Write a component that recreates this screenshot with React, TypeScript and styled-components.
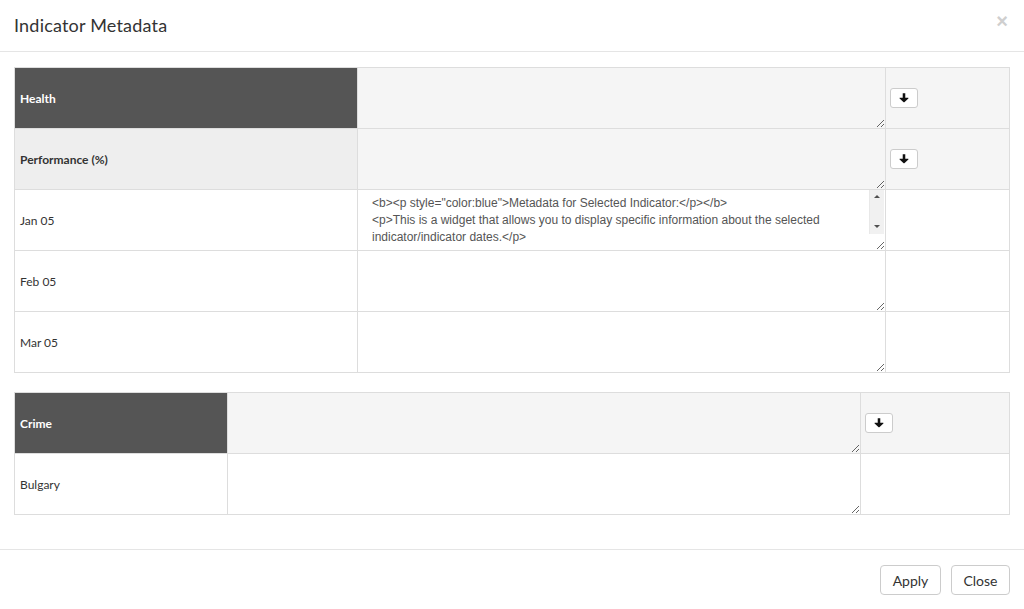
import React from "react";
import styled, { createGlobalStyle } from "styled-components";

const Global = createGlobalStyle`
  html, body { margin: 0; padding: 0; background: #fff; }
  body { font-family: Lato, "Open Sans", sans-serif; color: #333; }
  * { box-sizing: border-box; }
`;

const Modal = styled.div`
  width: 1024px;
  height: 609px;
  display: flex;
  flex-direction: column;
  background: #fff;
`;

const Header = styled.div`
  height: 52px;
  border-bottom: 1px solid #e5e5e5;
  display: flex;
  align-items: center;
  justify-content: space-between;
  padding: 0 14px 2px 14px;
`;

const Title = styled.h4`
  margin: 0;
  font-size: 18px;
  font-weight: 400;
  color: #333;
  letter-spacing: 0.2px;
`;

const CloseX = styled.button`
  border: 0;
  background: none;
  padding: 0;
  margin-right: 2px;
  margin-top: -8px;
  font-family: "Liberation Sans", Arial, sans-serif;
  font-size: 20px;
  font-weight: 700;
  line-height: 1;
  color: #cfcfcf;
  cursor: pointer;
`;

const Body = styled.div`
  flex: 1;
  padding: 15px 14px 0 14px;
  display: flex;
  flex-direction: column;
  gap: 19px;
`;

const Table = styled.table`
  width: 995px;
  border-collapse: collapse;
  table-layout: fixed;
  border: 1px solid #ddd;
`;

const Row = styled.tr`
  height: 61px;
`;

const LabelCell = styled.td<{ $variant: "dark" | "sub" | "plain" }>`
  border: 1px solid #ddd;
  padding: 0 5px;
  font-size: 12px;
  font-weight: ${(p) => (p.$variant === "plain" ? 400 : 700)};
  color: ${(p) => (p.$variant === "dark" ? "#fff" : "#333")};
  background: ${(p) =>
    p.$variant === "dark" ? "#555" : p.$variant === "sub" ? "#eee" : "#fff"};
  vertical-align: middle;
`;

const EditCell = styled.td<{ $shaded?: boolean }>`
  border: 1px solid #ddd;
  padding: 0;
  background: ${(p) => (p.$shaded ? "#f5f5f5" : "#fff")};
  vertical-align: top;
  height: 61px;
`;

const AreaWrap = styled.div`
  position: relative;
  height: 60px;
`;

const Area = styled.textarea<{ $shaded?: boolean }>`
  display: block;
  width: 100%;
  height: 60px;
  margin: 0;
  border: 0;
  outline: none;
  padding: 5px 14px 8px 14px;
  background: ${(p) => (p.$shaded ? "#f5f5f5" : "#fff")};
  font-family: "Liberation Sans", Arial, sans-serif;
  font-size: 12px;
  line-height: 17px;
  color: #555;
  resize: both;
  overflow: hidden;
`;

const FakeScrollbar = styled.div`
  position: absolute;
  top: 0;
  right: 1px;
  width: 15px;
  height: 44px;
  background: #f1f1f1;
  border-left: 1px solid #e8e8e8;
  display: flex;
  flex-direction: column;
  justify-content: space-between;
  align-items: center;
  padding: 5px 0 6px 0;
  pointer-events: none;
`;

const Tri = styled.span<{ $up?: boolean }>`
  width: 0;
  height: 0;
  border-left: 3px solid transparent;
  border-right: 3px solid transparent;
  ${(p) => (p.$up ? "border-bottom: 3px solid #505050;" : "border-top: 3px solid #505050;")}
`;

const ActionCell = styled.td<{ $shaded?: boolean }>`
  border: 1px solid #ddd;
  padding: 0 4px;
  background: ${(p) => (p.$shaded ? "#f5f5f5" : "#fff")};
  vertical-align: middle;
`;

const ArrowButton = styled.button`
  width: 28px;
  height: 20px;
  display: flex;
  align-items: center;
  justify-content: center;
  padding: 0;
  background: #fff;
  border: 1px solid #ccc;
  border-radius: 3px;
  cursor: pointer;
`;

const Footer = styled.div`
  height: 60px;
  border-top: 1px solid #e5e5e5;
  display: flex;
  justify-content: flex-end;
  align-items: flex-start;
  gap: 10px;
  padding: 15px 14px 0 14px;
`;

const FooterButton = styled.button<{ $w: number }>`
  width: ${(p) => p.$w}px;
  height: 30px;
  background: #fff;
  border: 1px solid #ccc;
  border-radius: 4px;
  font-family: Lato, "Open Sans", sans-serif;
  font-size: 14px;
  color: #333;
  cursor: pointer;
`;

const ArrowDown = () => (
  <svg width="12" height="12" viewBox="0 0 16 16" aria-hidden="true">
    <path
      d="M6.3 1.5h3.4v6.2h3.6c.6 0 .9.7.5 1.1L8.5 13.6c-.3.3-.7.3-1 0L2.2 8.8c-.4-.4-.1-1.1.5-1.1h3.6z"
      fill="#111"
    />
  </svg>
);

const longText =
  '<b><p style="color:blue">Metadata for Selected Indicator:</p></b>\n<p>This is a widget that allows you to display specific information about the selected indicator/indicator dates.</p>';

type Section = {
  title: string;
  widths: [number, number, number];
  sub?: string;
  rows: { label: string; text?: string }[];
};

const sections: Section[] = [
  {
    title: "Health",
    widths: [343, 528, 124],
    sub: "Performance (%)",
    rows: [{ label: "Jan 05", text: longText }, { label: "Feb 05" }, { label: "Mar 05" }],
  },
  {
    title: "Crime",
    widths: [213, 633, 149],
    rows: [{ label: "Bulgary" }],
  },
];

const SectionTable = ({ s }: { s: Section }) => (
  <Table>
    <colgroup>
      {s.widths.map((w, i) => (
        <col key={i} style={{ width: w }} />
      ))}
    </colgroup>
    <tbody>
      <Row>
        <LabelCell $variant="dark">{s.title}</LabelCell>
        <EditCell $shaded>
          <Area $shaded defaultValue="" />
        </EditCell>
        <ActionCell $shaded>
          <ArrowButton>
            <ArrowDown />
          </ArrowButton>
        </ActionCell>
      </Row>
      {s.sub && (
        <Row>
          <LabelCell $variant="sub">{s.sub}</LabelCell>
          <EditCell $shaded>
            <Area $shaded defaultValue="" />
          </EditCell>
          <ActionCell $shaded>
            <ArrowButton>
              <ArrowDown />
            </ArrowButton>
          </ActionCell>
        </Row>
      )}
      {s.rows.map((r) => (
        <Row key={r.label}>
          <LabelCell $variant="plain">{r.label}</LabelCell>
          <EditCell>
            <AreaWrap>
              <Area defaultValue={r.text ?? ""} />
              {r.text && (
                <FakeScrollbar>
                  <Tri $up />
                  <Tri />
                </FakeScrollbar>
              )}
            </AreaWrap>
          </EditCell>
          <ActionCell />
        </Row>
      ))}
    </tbody>
  </Table>
);

export default function App() {
  return (
    <>
      <Global />
      <Modal>
        <Header>
          <Title>Indicator Metadata</Title>
          <CloseX aria-label="Close">×</CloseX>
        </Header>
        <Body>
          {sections.map((s) => (
            <SectionTable key={s.title} s={s} />
          ))}
        </Body>
        <Footer>
          <FooterButton $w={61}>Apply</FooterButton>
          <FooterButton $w={59}>Close</FooterButton>
        </Footer>
      </Modal>
    </>
  );
}
